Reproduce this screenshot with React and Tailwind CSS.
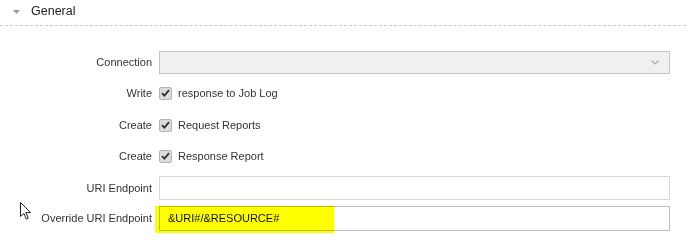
import React from "react";

function Check() {
  return (
    <span className="flex h-[13px] w-[13px] shrink-0 items-center justify-center rounded-[2px] border border-[#b5b5b5] bg-[#dcdcdc]">
      <svg width="9" height="8" viewBox="0 0 9 8">
        <path d="M1 4.2 L3.4 6.6 L8 1.2" fill="none" stroke="#333" strokeWidth="1.8" />
      </svg>
    </span>
  );
}

function Row({ label, children, className }) {
  return (
    <div className={"flex items-center " + className}>
      <div className="w-[152px] shrink-0 text-right">{label}</div>
      <div className="ml-[7px] flex w-[511px] items-center">{children}</div>
    </div>
  );
}

export default function App() {
  return (
    <div
      className="relative h-[251px] w-[690px] overflow-hidden bg-white text-[11px] text-[#333]"
      style={{ fontFamily: '"Liberation Sans", Arial, sans-serif' }}
    >
      <div className="mr-[4px] flex h-[26px] items-center border-b border-dashed border-[#c8c8c8] pb-[2px]">
        <svg className="ml-[13px]" width="7" height="4" viewBox="0 0 7 4">
          <path d="M0 0 L7 0 L3.5 4 Z" fill="#9a9a9a" />
        </svg>
        <span className="ml-[11px] text-[12.5px] text-[#222]">General</span>
      </div>

      <Row label="Connection" className="mt-[25px] h-[23px]">
        <div className="flex h-[23px] w-full items-center justify-end border border-[#c3c3c3] bg-[#f0f0f0] pr-[10px]">
          <svg width="8" height="5" viewBox="0 0 8 5">
            <path d="M0.5 0.5 L4 4 L7.5 0.5" fill="none" stroke="#aaa" strokeWidth="1.2" />
          </svg>
        </div>
      </Row>

      <Row label="Write" className="mt-[9px] h-[20px]">
        <Check />
        <span className="ml-[6px]">response to Job Log</span>
      </Row>

      <Row label="Create" className="mt-[12px] h-[20px]">
        <Check />
        <span className="ml-[6px]">Request Reports</span>
      </Row>

      <Row label="Create" className="mt-[11px] h-[20px]">
        <Check />
        <span className="ml-[6px]">Response Report</span>
      </Row>

      <Row label="URI Endpoint" className="mt-[10px] h-[24px]">
        <div className="h-[24px] w-full border border-[#d8d8d8] bg-white" />
      </Row>

      <Row label="Override URI Endpoint" className="relative mt-[6px] h-[25px]">
        <div className="flex h-[25px] w-full items-center border border-[#bdbdbd] bg-white pl-[8px] text-[#111]">
          &amp;URI#/&amp;RESOURCE#
        </div>
        <div className="pointer-events-none absolute left-[155px] top-0 h-[27px] w-[179px] bg-[#ffff00] mix-blend-multiply" />
      </Row>

      <svg className="absolute left-[20px] top-[202px]" width="13" height="18" viewBox="0 0 13 18">
        <path
          d="M0.5 0.5 L0.5 14.5 L3.8 11.4 L6.3 17 L8.3 16.1 L5.9 10.6 L10.6 10.6 Z"
          fill="#fff"
          stroke="#222"
          strokeWidth="1"
          strokeLinejoin="round"
        />
      </svg>
    </div>
  );
}
